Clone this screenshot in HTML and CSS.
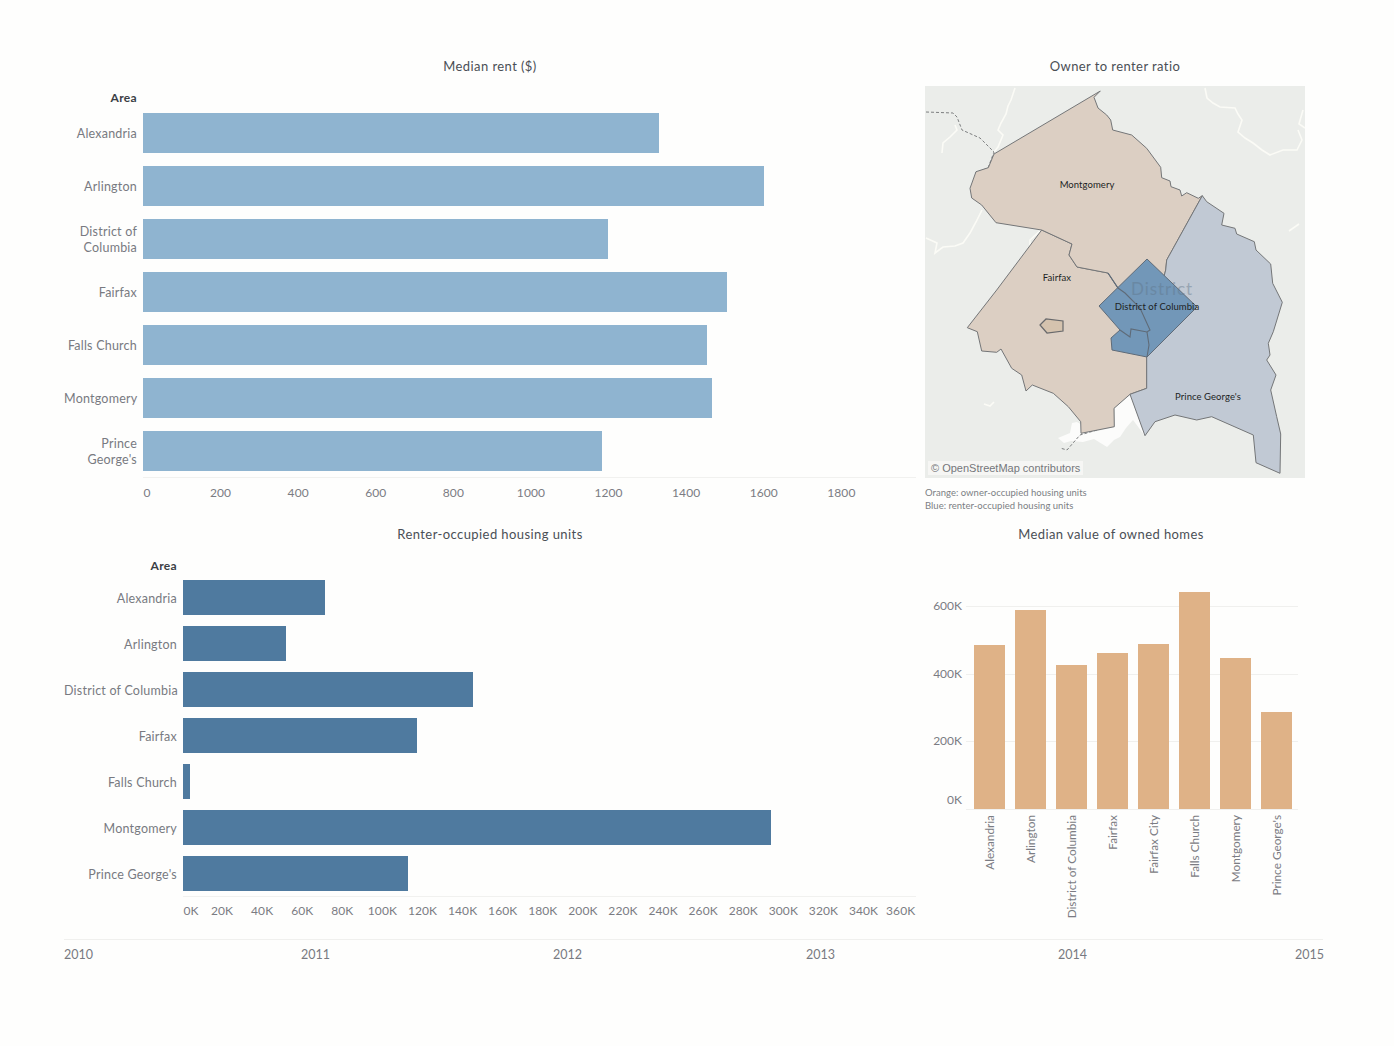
FILE: index.html
```html
<!DOCTYPE html>
<html lang="en">
<head>
<meta charset="utf-8">
<title>Housing dashboard</title>
<link rel="stylesheet" href="styles.css">
</head>
<body>
<main class="dash">
  <div class="panels">
    <section class="panel rent">
      <h2 class="title">Median rent ($)</h2>
      <div class="hbar">
        <div class="hbar-head">Area</div>
        <div class="row"><div class="lab">Alexandria</div><div class="bar" style="width:516px"></div></div>
        <div class="row"><div class="lab">Arlington</div><div class="bar" style="width:621px"></div></div>
        <div class="row"><div class="lab">District of<br>Columbia</div><div class="bar" style="width:465px"></div></div>
        <div class="row"><div class="lab">Fairfax</div><div class="bar" style="width:584px"></div></div>
        <div class="row"><div class="lab">Falls Church</div><div class="bar" style="width:564px"></div></div>
        <div class="row"><div class="lab">Montgomery</div><div class="bar" style="width:569px"></div></div>
        <div class="row"><div class="lab">Prince<br>George's</div><div class="bar" style="width:459px"></div></div>
      </div>
      <div class="axis">
        <span class="tick zero">0</span><span class="tick">200</span><span class="tick">400</span><span class="tick">600</span><span class="tick">800</span><span class="tick">1000</span><span class="tick">1200</span><span class="tick">1400</span><span class="tick">1600</span><span class="tick">1800</span>
      </div>
    </section>

    <section class="panel owner">
      <h2 class="title">Owner to renter ratio</h2>
      <svg class="map" viewBox="925 86 380 392" width="380" height="392" aria-label="Map of owner to renter ratio">
        <rect class="land" x="925" y="86" width="380" height="392"/>
        <g class="river">
          <polyline points="1015,88 1011,100 1008,106 1006,114 1001,123 998,130 1003,135 998,147 994,152"/>
          <polyline points="1205,88 1207,98 1213,103 1220,107 1235,108 1238,114 1242,120 1238,132 1245,138 1253,143 1262,150 1270,155 1283,150 1297,150 1302,140 1298,130"/>
          <polyline points="942,153 943,143 950,137 957,130 955,125"/>
          <polyline points="926,238 937,243 935,253 943,247 955,246 963,243 970,233 976,222 982,210"/>
          <polyline points="1041,230 1030,240 1030,248"/>
          <polyline points="1303,110 1299,124 1305,128"/>
          <polyline points="1289,231 1299,224"/>
          <polyline points="994,402 990,406 984,404"/>
        </g>
        <polygon class="bay" points="1130,395 1115,408 1115,427 1093,432 1077,422 1072,423 1070,433 1058,438 1064,443 1071,441 1083,442 1094,439 1107,447 1114,440 1120,437 1126,428 1133,420 1145,436"/>
        <polyline class="border" points="926,112 953,113 957,117 962,130 980,138 994,152 988,168 975,173"/>
        <polyline class="border" points="1097,430 1080,435 1067,450 1060,448"/>
        <polygon class="gap" points="1093,305 1093,313 1106,314 1099,306"/>
        <polygon class="orange" points="1041.7,230 996.7,290 967.3,327.7 977.3,331.7 981.7,351 996.7,352.3 1001,349 1011.7,368.3 1021.7,375 1026,391 1032.3,385 1053.3,393.3 1068.3,406.7 1080.7,421.7 1081,433.3 1114.3,426.7 1114,408.3 1130,394.3 1146.7,388.3 1146.7,356.7 1150,330 1140,308 1125,293 1118,288 1108,273 1077,267 1069,255 1072,244"/>
        <polygon class="orange" points="1100.3,91 1094,97.3 1098,108 1106.7,115 1110.7,120 1112.7,130 1131.7,135 1146.7,148.3 1160.7,167.3 1161.7,177.7 1170,181 1171,186.7 1180,190 1181.7,196 1186.7,192.7 1198.3,198.3 1202.3,195.7 1166.7,260 1165.7,270 1150,330 1140,308 1125,293 1118,288 1108,273 1077,267 1069,255 1072,244 1041.7,230 996,222.7 981.7,205 971.7,198 970,188.3 976,171.7 988.3,167.7 994,154"/>
        <polygon class="blue" points="1202.3,195.7 1206.7,201.7 1224,213.3 1221.7,225 1235,228.3 1236.7,234 1254.3,241.7 1256,250 1270.7,264 1272.7,283.3 1282.3,302.3 1273.3,331.7 1268.3,343.3 1270,355 1266.7,360 1276,375 1270.7,390 1276.7,416.7 1280.7,434 1280,473.3 1256,462.7 1253.3,435 1211.7,416.7 1196.7,420 1175,415 1155,421.7 1145,435.7 1130,394.3 1146.7,388.3 1146.7,356.7 1150,330 1165.7,270 1166.7,260"/>
        <polygon class="city" points="1040,325 1046,319 1063,321 1063,331 1047,333"/>
        <polygon class="dc" points="1147,259 1197,307 1147,357 1112,350 1111,338 1120,330 1099,306"/>
        <polyline class="inner" points="1108,273 1118,288 1125,293 1140,308 1150,330 1147,332 1131,329 1130,337 1120,330"/>
        <polyline class="inner" points="1147,332 1149,345 1147,357"/>
        <text class="ghost" x="1162" y="295" text-anchor="middle">District</text>
        <text class="place" x="1087" y="188" text-anchor="middle">Montgomery</text>
        <text class="place" x="1057" y="281" text-anchor="middle">Fairfax</text>
        <text class="place" x="1157" y="310" text-anchor="middle">District of Columbia</text>
        <text class="place" x="1208" y="400" text-anchor="middle">Prince George's</text>
        <rect class="credit-bg" x="928" y="461" width="155" height="14"/>
        <text class="credit" x="931" y="472">© OpenStreetMap contributors</text>
      </svg>
      <p class="note">Orange: owner-occupied housing units<br>Blue: renter-occupied housing units</p>
    </section>

    <section class="panel units">
      <h2 class="title">Renter-occupied housing units</h2>
      <div class="hbar">
        <div class="hbar-head">Area</div>
        <div class="row"><div class="lab">Alexandria</div><div class="bar" style="width:142px"></div></div>
        <div class="row"><div class="lab">Arlington</div><div class="bar" style="width:103px"></div></div>
        <div class="row"><div class="lab">District of Columbia</div><div class="bar" style="width:290px"></div></div>
        <div class="row"><div class="lab">Fairfax</div><div class="bar" style="width:234px"></div></div>
        <div class="row"><div class="lab">Falls Church</div><div class="bar" style="width:7px"></div></div>
        <div class="row"><div class="lab">Montgomery</div><div class="bar" style="width:588px"></div></div>
        <div class="row"><div class="lab">Prince George's</div><div class="bar" style="width:225px"></div></div>
      </div>
      <div class="axis">
        <span class="tick zero">0K</span><span class="tick">20K</span><span class="tick">40K</span><span class="tick">60K</span><span class="tick">80K</span><span class="tick">100K</span><span class="tick">120K</span><span class="tick">140K</span><span class="tick">160K</span><span class="tick">180K</span><span class="tick">200K</span><span class="tick">220K</span><span class="tick">240K</span><span class="tick">260K</span><span class="tick">280K</span><span class="tick">300K</span><span class="tick">320K</span><span class="tick">340K</span><span class="tick last">360K</span>
      </div>
    </section>

    <section class="panel homes">
      <h2 class="title">Median value of owned homes</h2>
      <div class="vchart">
        <div class="yaxis"><span>600K</span><span>400K</span><span>200K</span><span>0K</span></div>
        <div class="vmain">
          <div class="plot">
            <div class="grid-lines"><i></i><i></i><i></i></div>
            <div class="columns">
              <div class="col" style="height:164px"></div>
              <div class="col" style="height:199px"></div>
              <div class="col" style="height:144px"></div>
              <div class="col" style="height:156px"></div>
              <div class="col" style="height:165px"></div>
              <div class="col" style="height:217px"></div>
              <div class="col" style="height:151px"></div>
              <div class="col" style="height:97px"></div>
            </div>
          </div>
          <div class="xlabels">
            <span><b>Alexandria</b></span><span><b>Arlington</b></span><span><b>District of Columbia</b></span><span><b>Fairfax</b></span><span><b>Fairfax City</b></span><span><b>Falls Church</b></span><span><b>Montgomery</b></span><span><b>Prince George's</b></span>
          </div>
        </div>
      </div>
    </section>
  </div>

  <footer class="timeline">
    <span>2010</span><span>2011</span><span>2012</span><span>2013</span><span>2014</span><span>2015</span>
  </footer>
</main>
</body>
</html>
```
FILE: styles.css
```css
* { box-sizing: border-box; }
html, body { margin: 0; padding: 0; background: #fefefd; }
body { font-family: Lato, "Open Sans", "Liberation Sans", sans-serif; color: #6f7178; }

.dash { width: 1394px; height: 1046px; padding: 58px 0 0 64px; overflow: hidden; }

.panels {
  display: grid;
  grid-template-columns: 852px 380px;
  grid-template-rows: 468px 413px;
  column-gap: 9px;
}

.title {
  margin: 0;
  height: 16px;
  line-height: 16px;
  font-size: 13px;
  font-weight: 400;
  letter-spacing: .42px;
  text-align: center;
  color: #4a4f55;
}

/* horizontal bars */
.hbar-head { height: 16px; line-height: 16px; font-size: 12px; font-weight: 700; letter-spacing: .35px; text-align: right; color: #3b3f45; }
.row { display: flex; align-items: center; }
.lab { flex: none; padding-top: 2px; text-align: right; font-size: 12.5px; line-height: 16px; letter-spacing: .22px; color: #787a81; }
.bar { flex: none; }

.rent .hbar { padding-top: 16px; }
.rent .hbar-head { width: 73px; margin-bottom: 7px; }
.rent .row { height: 40px; margin-bottom: 13px; }
.rent .row:last-child { margin-bottom: 0; }
.rent .lab { width: 73px; margin-right: 6px; white-space: nowrap; }
.rent .bar { height: 40px; background: #8fb4d0; }
.rent .axis { margin: 6px 0 0 79px; padding-top: 7px; }
.rent .tick { width: 77.6px; }
.rent .tick.zero { width: 8px; margin-right: 30.8px; }

.units .hbar { padding-top: 16px; }
.units .hbar-head { width: 113px; margin-bottom: 6px; }
.units .row { height: 35px; margin-bottom: 11px; }
.units .row:last-child { margin-bottom: 0; }
.units .lab { width: 113px; margin-right: 6px; white-space: nowrap; }
.units .bar { height: 35px; background: #4f7a9f; }
.units .axis { margin: 5px 0 0 119px; padding-top: 6px; white-space: nowrap; }
.units .tick { width: 40.1px; }
.units .tick.zero { width: 16px; margin-right: 3px; }
.units .tick.last { margin-left: -3px; }

.axis { display: flex; border-top: 1px solid #f1f1ef; height: 24px; }
.tick { flex: none; text-align: center; font-size: 12px; line-height: 16px; letter-spacing: .1px; color: #7b7c83; }

/* map */
.owner .title { margin-bottom: 12px; }
.map { display: block; }
.land { fill: #ebedea; }
.river polyline { fill: none; stroke: #fbfbf6; stroke-width: 1.6; }
.bay { fill: #fcfcfb; }
.border { fill: none; stroke: #7d7f80; stroke-width: 1; stroke-dasharray: 3 2; }
.gap { fill: #e3e8ea; stroke: #707274; stroke-width: 1.2; }
.orange { fill: #dccfc3; stroke: #747678; stroke-width: 1; }
.blue { fill: #c1c9d4; stroke: #747678; stroke-width: 1; }
.city { fill: #d5c3ae; stroke: #68696b; stroke-width: 1.2; }
.dc { fill: #7297b8; stroke: #5f6b78; stroke-width: 1; }
.inner { fill: none; stroke: #5f6b78; stroke-width: 1.1; }
.ghost { font-size: 17px; font-weight: 400; fill: #5f7488; opacity: .42; letter-spacing: .9px; }
.place { font-size: 9.5px; letter-spacing: .06px; fill: #1d1f24; }
.credit-bg { fill: #f6f6f4; }
.credit { font-family: "Liberation Sans", Arial, sans-serif; font-size: 11px; fill: #75777b; }
.note { margin: 8px 0 0; font-size: 9.5px; line-height: 13px; letter-spacing: .02px; color: #7c7e84; }

/* columns */
.homes .title { width: 372px; }
.vchart { display: flex; padding-top: 34px; }
.yaxis {
  flex: none;
  width: 37px;
  margin-right: 4px;
  padding-top: 22px;
  display: grid;
  grid-template-rows: 68px 67px 59px 16px;
  justify-items: end;
  font-size: 12px;
  line-height: 16px;
  color: #7b7c83;
}
.vmain { width: 332px; }
.plot { display: grid; height: 234px; border-bottom: 1px solid #f0f0ee; padding-top: 16px; }
.plot > * { grid-area: 1 / 1; }
.grid-lines { padding-top: 14px; }
.grid-lines i { display: block; height: 68px; border-top: 1px solid #f0f0ee; }
.grid-lines i:nth-child(2) { height: 67px; }
.columns { display: flex; align-items: flex-end; gap: 10px; padding-left: 8px; }
.col { flex: none; width: 31px; background: #deb083; opacity: .97; }
.xlabels { display: flex; gap: 10px; padding: 5px 0 0 8px; }
.xlabels span { flex: none; width: 31px; display: flex; justify-content: center; align-items: flex-start; }
.xlabels b {
  display: block;
  font-weight: 400;
  font-size: 11.8px;
  line-height: 16px;
  white-space: nowrap;
  writing-mode: vertical-rl;
  transform: rotate(180deg);
  color: #7b7c83;
}

/* time line */
.timeline {
  width: 1259px;
  padding-top: 7px;
  border-top: 1px solid #f0f0ee;
  display: grid;
  grid-template-columns: 237px 252px 253px 252px 237px 28px;
  font-size: 12.5px;
  line-height: 16px;
  color: #787a81;
}
```
